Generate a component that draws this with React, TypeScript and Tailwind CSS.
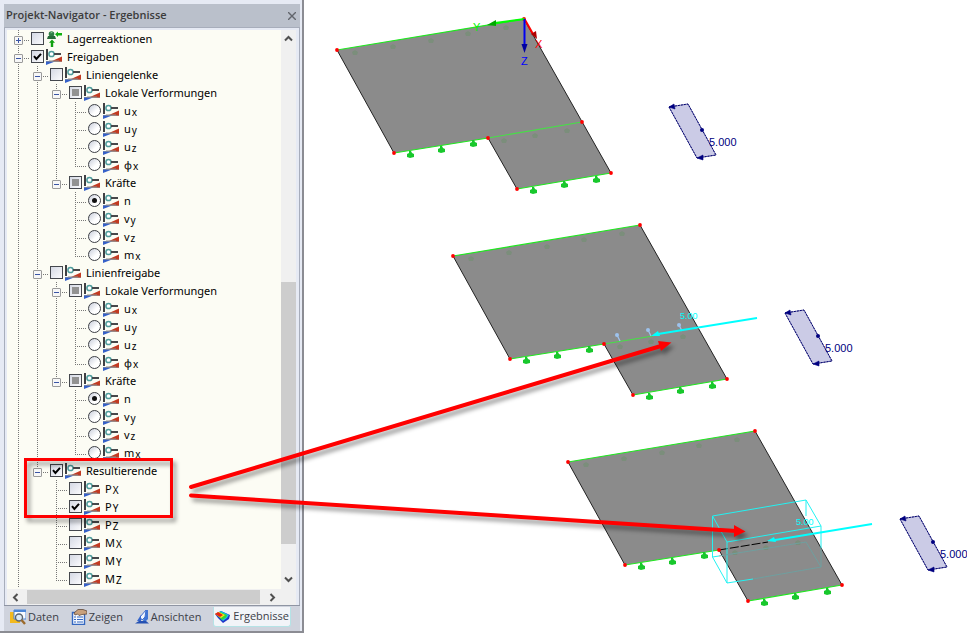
import { useState } from 'react';
import type { ReactNode } from 'react';

type TreeNode = {
  id: string;
  label: string;
  sub?: string;
  icon?: 'support' | 'release';
  control?: 'checkbox' | 'radio';
  group?: string;
  checked?: boolean;
  mixed?: boolean;
  collapsed?: boolean;
  children?: TreeNode[];
};

const radios = (group: string, items: [string, string?][], selected?: string): TreeNode[] =>
  items.map(([label, sub]) => ({
    id: `${group}-${label}${sub ?? ''}`,
    label,
    sub,
    control: 'radio',
    group,
    checked: label === selected,
  }));

const resultGroups = (prefix: string): TreeNode[] => [
  {
    id: `${prefix}-verformungen`,
    label: 'Lokale Verformungen',
    mixed: true,
    children: radios(`${prefix}-u`, [['u', 'x'], ['u', 'y'], ['u', 'z'], ['φ', 'x']]),
  },
  {
    id: `${prefix}-kraefte`,
    label: 'Kräfte',
    mixed: true,
    children: radios(`${prefix}-k`, [['n'], ['v', 'y'], ['v', 'z'], ['m', 'x']], 'n'),
  },
];

const tree: TreeNode[] = [
  { id: 'lager', label: 'Lagerreaktionen', icon: 'support', collapsed: true, children: [] },
  {
    id: 'freigaben',
    label: 'Freigaben',
    checked: true,
    children: [
      { id: 'gelenke', label: 'Liniengelenke', children: resultGroups('gelenke') },
      { id: 'freigabe', label: 'Linienfreigabe', children: resultGroups('freigabe') },
      {
        id: 'resultierende',
        label: 'Resultierende',
        checked: true,
        children: [
          { id: 'px', label: 'P', sub: 'X' },
          { id: 'py', label: 'P', sub: 'Y', checked: true },
          { id: 'pz', label: 'P', sub: 'Z' },
          { id: 'mx', label: 'M', sub: 'X' },
          { id: 'my', label: 'M', sub: 'Y' },
          { id: 'mz', label: 'M', sub: 'Z' },
        ],
      },
    ],
  },
];

function ReleaseIcon() {
  return (
    <svg width="16" height="16" viewBox="0 0 16 16" aria-hidden="true">
      <path d="M0 0h2v11H0z" fill="#3f4044" />
      <circle cx="5.5" cy="5" r="2.6" fill="#fff" stroke="#4f9c9c" strokeWidth="1.5" />
      <path d="M8 4h7v2H8z" fill="#46474a" />
      <path d="M0 12h16v1H0z" fill="#9b9b9b" />
      <path d="M16 7.5V12.5L6 12z" fill="#c23a22" />
      <path d="M0 12.5H9L0 16z" fill="#3560c8" />
      <path d="M3 11.5h10v1H3z" fill="#8d8d8d" />
    </svg>
  );
}

function SupportIcon() {
  return (
    <svg width="16" height="16" viewBox="0 0 16 16" aria-hidden="true">
      <circle cx="5.5" cy="3" r="2.8" fill="#2f7d45" />
      <path d="M2 5h7l1 3H1z" fill="#276b3a" />
      <path d="M4 2.2l1.4-1.2L7 2z" fill="#8fcf9d" />
      <path d="M9 3.2L12 .5V2h4v2.4h-4V6z" fill="#10b010" />
      <path d="M6 8.5l3 3.2H7.2V16H4.8v-4.3H3z" fill="#10a010" />
    </svg>
  );
}

function Control({ node }: { node: TreeNode }) {
  if (node.control === 'radio') {
    return (
      <span className="relative block size-[13px]">
        <input
          id={node.id}
          type="radio"
          name={node.group}
          defaultChecked={node.checked}
          className="peer block size-[13px] appearance-none rounded-full border border-[#3c3f45] bg-linear-to-br from-[#c8cdda] to-white to-60%"
        />
        <span className="pointer-events-none absolute left-[4px] top-[4px] hidden size-[5px] rounded-full bg-[#111] peer-checked:block" />
      </span>
    );
  }
  return (
    <span className="relative block size-[13px]">
      <input
        id={node.id}
        type="checkbox"
        defaultChecked={node.checked}
        ref={(el) => {
          if (el && node.mixed) el.indeterminate = true;
        }}
        className="peer block size-[13px] appearance-none border border-[#44474d] bg-linear-to-br from-[#d5d9e4] to-[#fbfbfd]"
      />
      <svg
        className="pointer-events-none absolute inset-0 hidden peer-checked:block"
        width="13"
        height="13"
        viewBox="0 0 13 13"
        aria-hidden="true"
      >
        <path d="M3 6.2L5.4 9L10 3.8" fill="none" stroke="#000" strokeWidth="2" />
      </svg>
      <span className="pointer-events-none absolute left-[3px] top-[3px] hidden size-[7px] bg-[#929292] peer-indeterminate:block" />
    </span>
  );
}

// One indent step with its dotted connector lines
function Guide({ down, right, up }: { up: boolean; down: boolean; right: boolean }) {
  return (
    <svg width="19" height="18" className="shrink-0 overflow-visible" aria-hidden="true">
      <g stroke="#777" strokeDasharray="1 1">
        {up && <path d="M9.5 0V10" />}
        {down && <path d="M9.5 10V18" />}
        {right && <path d="M9 10.5H21" />}
      </g>
    </svg>
  );
}

function Row({ node, guides, last }: { node: TreeNode; guides: boolean[]; last: boolean }) {
  const [open, setOpen] = useState(!node.collapsed);

  return (
    <li>
      <div className="flex h-[18px]">
        {guides.map((on, i) => (
          <Guide key={i} up={on} down={on} right={false} />
        ))}
        <span className="relative block w-[19px]">
          <Guide up down={!last} right />
          {node.children && (
            <button
              type="button"
              aria-label={`${node.label} ${open ? 'zuklappen' : 'aufklappen'}`}
              onClick={() => setOpen(!open)}
              className="absolute left-[5px] top-[6px] flex size-[9px] items-center justify-center rounded-[1px] border border-[#9a9a9a] bg-[#f7f7f7]"
            >
              <svg width="7" height="7" className="shrink-0" aria-hidden="true">
                <path d={open ? 'M1 3.5H6' : 'M1 3.5H6M3.5 1V6'} stroke="#3a55a5" />
              </svg>
            </button>
          )}
        </span>
        <div className="flex items-center gap-[2px] pb-px pl-[3px]">
          <Control node={node} />
          <label htmlFor={node.id} className="flex items-center gap-[5px] whitespace-nowrap leading-4">
            {node.icon === 'support' ? <SupportIcon /> : <ReleaseIcon />}
            <span>
              {node.label}
              {node.sub && <span className="ml-px align-[-1px] text-[10px] leading-none">{node.sub}</span>}
            </span>
          </label>
        </div>
      </div>
      {open && node.children && node.children.length > 0 && (
        <ul>
          {node.children.map((child, i) => (
            <Row
              key={child.id}
              node={child}
              guides={[...guides, !last]}
              last={i === node.children!.length - 1}
            />
          ))}
        </ul>
      )}
    </li>
  );
}

function ScrollButton({ label, d }: { label: string; d: string }) {
  return (
    <button type="button" aria-label={label} className="flex size-4 shrink-0 items-center justify-center">
      <svg width="9" height="9" fill="none" stroke="#505050" strokeWidth="2" aria-hidden="true">
        <path d={d} />
      </svg>
    </button>
  );
}

function Tab({ label, active, children }: { label: string; active?: boolean; children: ReactNode }) {
  return (
    <button
      type="button"
      role="tab"
      aria-selected={!!active}
      className={`flex h-5 items-center gap-[2px] rounded-b-[3px] whitespace-nowrap ${
        active ? 'border border-t-0 border-[#b5e3e6] bg-[#f2f4f8] px-px' : ''
      }`}
    >
      {children}
      {label}
    </button>
  );
}

function Navigator() {
  return (
    <aside className="flex min-h-screen w-[304px] shrink-0 flex-col border-b-2 border-r-2 border-[#8b8c93] bg-[#e6eaf4] pl-1 pr-[2px] pt-1 text-black">
      <header className="flex h-6 items-center justify-between border-b border-[#a7adbb] bg-[#bac0cb] pl-[2px] pr-1 text-[#3c3c3c]">
        <h1 className="text-[11px] font-semibold">Projekt-Navigator - Ergebnisse</h1>
        <button type="button" aria-label="Schließen">
          <svg width="8" height="8" stroke="#62656c" strokeWidth="1.4" aria-hidden="true">
            <path d="M0 0L8 8M8 0L0 8" />
          </svg>
        </button>
      </header>
      <div className="flex grow flex-col border-x border-[#a7adbb] pl-[2px] pr-[3px] pt-[2px]">
        <div className="flex grow">
          <ul className="grow overflow-hidden bg-[#fcfcf4] pl-[2px] font-['Noto_Sans','Open_Sans',sans-serif] text-[11px]">
            {tree.map((node) => (
              <Row key={node.id} node={node} guides={[]} last={false} />
            ))}
          </ul>
          <div className="flex w-[15px] flex-col items-center bg-[#f0f0f0] pb-[2px]">
            <ScrollButton label="Nach oben" d="M1 6.5L4.5 3L8 6.5" />
            <div className="mb-[27px] mt-auto h-[262px] w-full bg-[#cdcdcd]" />
            <ScrollButton label="Nach unten" d="M1 2.5L4.5 6L8 2.5" />
          </div>
        </div>
        <div className="flex h-4 bg-[#f0f0f0] pr-4">
          <ScrollButton label="Nach links" d="M6.5 1L3 4.5L6.5 8" />
          <div className="mx-1 grow border-y border-[#f0f0f0] bg-[#cdcdcd]" />
          <ScrollButton label="Nach rechts" d="M2.5 1L6 4.5L2.5 8" />
        </div>
      </div>
      <div
        role="tablist"
        className="flex h-[26px] items-start justify-between border-t border-[#8f95a3] bg-[#cfd3dd] pl-[6px] pr-[9px] pt-px text-[11px] text-[#3c4048]"
      >
        <Tab label="Daten">
          <svg width="16" height="16" aria-hidden="true">
            <path d="M0 3h4l1 1h5v10H0z" fill="#f2b91d" />
            <path d="M4 1h12v9H4z" fill="#f8fbff" stroke="#4a86d8" />
            <path d="M4 1h12v2H4z" fill="#4a86d8" />
            <circle cx="9" cy="8.5" r="3.5" fill="#dceaf5" stroke="#5d6670" strokeWidth="1.4" />
            <path d="M11.5 11l3.5 4" stroke="#9b6a2b" strokeWidth="2.4" />
          </svg>
        </Tab>
        <Tab label="Zeigen">
          <svg width="16" height="16" aria-hidden="true">
            <path d="M1.5 3.5h12v12h-12z" fill="#f4f8ff" stroke="#3568c0" strokeWidth="1.4" />
            <path d="M3 8h2M3 10.5h2M3 13h2M6 8h6M6 10.5h6M6 13h6" stroke="#3568c0" />
            <path d="M3 4l4-3.5h5L16 2v3l-5 .5-3 1-1.5-1.5L4 6z" fill="#c9a17c" stroke="#60493a" strokeWidth=".8" />
          </svg>
        </Tab>
        <Tab label="Ansichten">
          <svg width="14" height="16" aria-hidden="true">
            <path d="M11 1h2v9l-2 2H8z" fill="#3f74d4" />
            <path d="M11 1L5 8l2 3 3-3z" fill="#f3f7ff" stroke="#3f6fcf" strokeWidth="1" />
            <path d="M6 6L2 12h4z" fill="#3565cc" />
            <path d="M0 14.5L4 12h7l3 2.500z" fill="#2450b2" />
          </svg>
        </Tab>
        <Tab label="Ergebnisse" active>
          <svg width="16" height="16" aria-hidden="true">
            <path d="M0 5L6 2l9 4-1 4-6 4L3 9z" fill="#2035c8" />
            <path d="M1 5l5-3 8 4-2 3-4 3z" fill="#19c3e6" />
            <path d="M1 5l4-2 7 3-1 2.500-4 2.500z" fill="#35d435" />
            <path d="M0 5l4-2 6 3-4 3z" fill="#f7e51b" />
            <path d="M0 5l3-2L8 6 5 8z" fill="#e62618" />
          </svg>
        </Tab>
      </div>
    </aside>
  );
}

const SUPPORTS = [
  [410, 154],
  [441, 149],
  [473, 143],
  [533, 190],
  [564, 184],
  [596, 179],
];

const HIDDEN_SUPPORTS = [
  [355, 50],
  [393, 44],
  [431, 38],
  [468, 31],
  [506, 25],
  [504, 138],
  [535, 133],
  [567, 128],
];

const CORNERS = [
  [337, 50],
  [524, 19],
  [611, 173],
  [517, 189],
  [488, 138],
  [394, 153],
];

// Plate with supports and the line load next to it
function Plate({ x, y, joint }: { x: number; y: number; joint: 'full' | 'half' | 'none' }) {
  return (
    <g transform={`translate(${x} ${y})`}>
      <path d="M337 50L524 19L611 173L517 189L488 138L394 153Z" fill="#8b8b8b" />
      <path d="M337 50L394 153M488 138L517 189M524 19L611 173" stroke="#222" />
      <g fill="#7b8e7b">
        {HIDDEN_SUPPORTS.map(([sx, sy]) => (
          <path key={sx} d={`M${sx} ${sy}l3 2-1 3h-4l-1-3z`} />
        ))}
      </g>
      <path d="M337 50L524 19M394 153L488 138M517 189L611 173" stroke="#1fe81f" strokeWidth="1.2" />
      {joint === 'full' && <path d="M488 138L582 122" stroke="#46e046" strokeWidth="1.2" />}
      {joint === 'half' && <path d="M488 138L537 130" stroke="#46e046" strokeWidth="1.2" />}
      {joint === 'none' && <path d="M488 138L537 130" stroke="#000" strokeDasharray="9 2" />}
      <g fill="#18c82c">
        {SUPPORTS.map(([sx, sy]) => (
          <path key={sx} d={`M${sx - 1} ${sy - 3}h2l1 2 2 1v3l-4 1-3-1v-3l2-1z`} />
        ))}
      </g>
      <g fill="#f00">
        {CORNERS.map(([cx, cy]) => (
          <circle key={cx} cx={cx} cy={cy} r="1.9" />
        ))}
        <circle cx="582" cy="122" r={joint === 'full' ? 1.9 : 1} />
      </g>
      <path d="M669 107L688 104L716 155L697 158Z" fill="#cbcbe6" stroke="#8080b4" />
      <path d="M669 107L688 104L716 155L697 158Z" stroke="#00006e" strokeDasharray="2 1" />
      <path d="M669 107l5-3 1 5zM697 158l6-3v5z" fill="#000080" stroke="#000080" strokeWidth=".6" />
      <circle cx="702" cy="130" r="2" fill="#000080" />
      <text x="709" y="146" fill="#000080" className="text-[11px]">
        5.000
      </text>
    </g>
  );
}

function Scene() {
  return (
    <svg
      width="663"
      height="633"
      viewBox="304 0 663 633"
      fill="none"
      className="block font-['Liberation_Sans',Arial,sans-serif]"
      role="img"
      aria-label="Plattenmodelle mit resultierender Kraft"
    >
      <Plate x={0} y={0} joint="full" />
      <Plate x={116} y={206} joint="half" />
      <Plate x={231} y={412} joint="none" />

      {/* global axes */}
      <path d="M524.5 19L495 23" stroke="#00ff00" strokeWidth="2" />
      <path d="M487 25l9-5v6z" fill="#00a800" />
      <path d="M524.5 19L533 34" stroke="#f00" strokeWidth="2" />
      <path d="M537 39l-6-5 5-3z" fill="#b00000" />
      <path d="M524.5 19V45" stroke="#0000f0" strokeWidth="2" />
      <path d="M524.5 53l-3-9h6z" fill="#0000a0" />
      <text x="473" y="31" fill="#00f000" className="text-[11px]">Y</text>
      <text x="535" y="48" fill="#ff0000" className="text-[11px]">X</text>
      <text x="521" y="65" fill="#0000ff" className="text-[11px]">Z</text>

      {/* release pins */}
      <path d="M617 335l3 6M648 330l3 6M679 325l3 6" stroke="#9dc3ee" strokeWidth="1.3" />
      <g fill="#9dc3ee">
        <circle cx="617" cy="335" r="2" />
        <circle cx="648" cy="330" r="2" />
        <circle cx="679" cy="325" r="2" />
      </g>

      {/* resultant force */}
      <path d="M757 318L658 334" stroke="#00ffff" strokeWidth="1.8" />
      <path d="M651 336l7-5 2 5z" fill="#00ffff" />
      <text x="680" y="319" fill="#00ffff" className="text-[9px]">5.00</text>

      <path
        d="M712.5 557V516L806 500L821 526L727 542L712.5 516M727 542V583L712.5 557L719 556M821 526V548M806 500V516M727 583L753 579"
        stroke="#22f2f2"
      />
      <path d="M719 556L806 542L821 567L753 579M821 548V567" stroke="#6f9f9f" />
      <path d="M872 524L775 540" stroke="#00ffff" strokeWidth="1.8" />
      <path d="M767 541l7-4 2 5z" fill="#00ffff" />
      <text x="796" y="525" fill="#00ffff" className="text-[9px]">5.00</text>
    </svg>
  );
}

// Red callout marks that lie over the navigator and the model view
function Callouts() {
  return (
    <svg
      width="967"
      height="633"
      className="pointer-events-none absolute left-0 top-0 drop-shadow-[3px_4px_2px_rgba(0,0,0,0.4)]"
      fill="none"
      aria-hidden="true"
    >
      <rect x="25.5" y="459.5" width="146" height="57" stroke="#f00" strokeWidth="3" />
      <path d="M191 487L661 346M191 495.5L736 531" stroke="#f00" strokeWidth="4" strokeLinecap="round" />
      <path d="M671.5 342.5L658 341L661 351Z" fill="#f00" />
      <path d="M745.5 531.5L734 525V537Z" fill="#f00" />
    </svg>
  );
}

export default function App() {
  return (
    <div className="relative flex min-h-screen overflow-hidden bg-white font-['Open_Sans','Noto_Sans',sans-serif]">
      <Navigator />
      <main className="min-w-0 grow overflow-hidden">
        <Scene />
      </main>
      <Callouts />
    </div>
  );
}
